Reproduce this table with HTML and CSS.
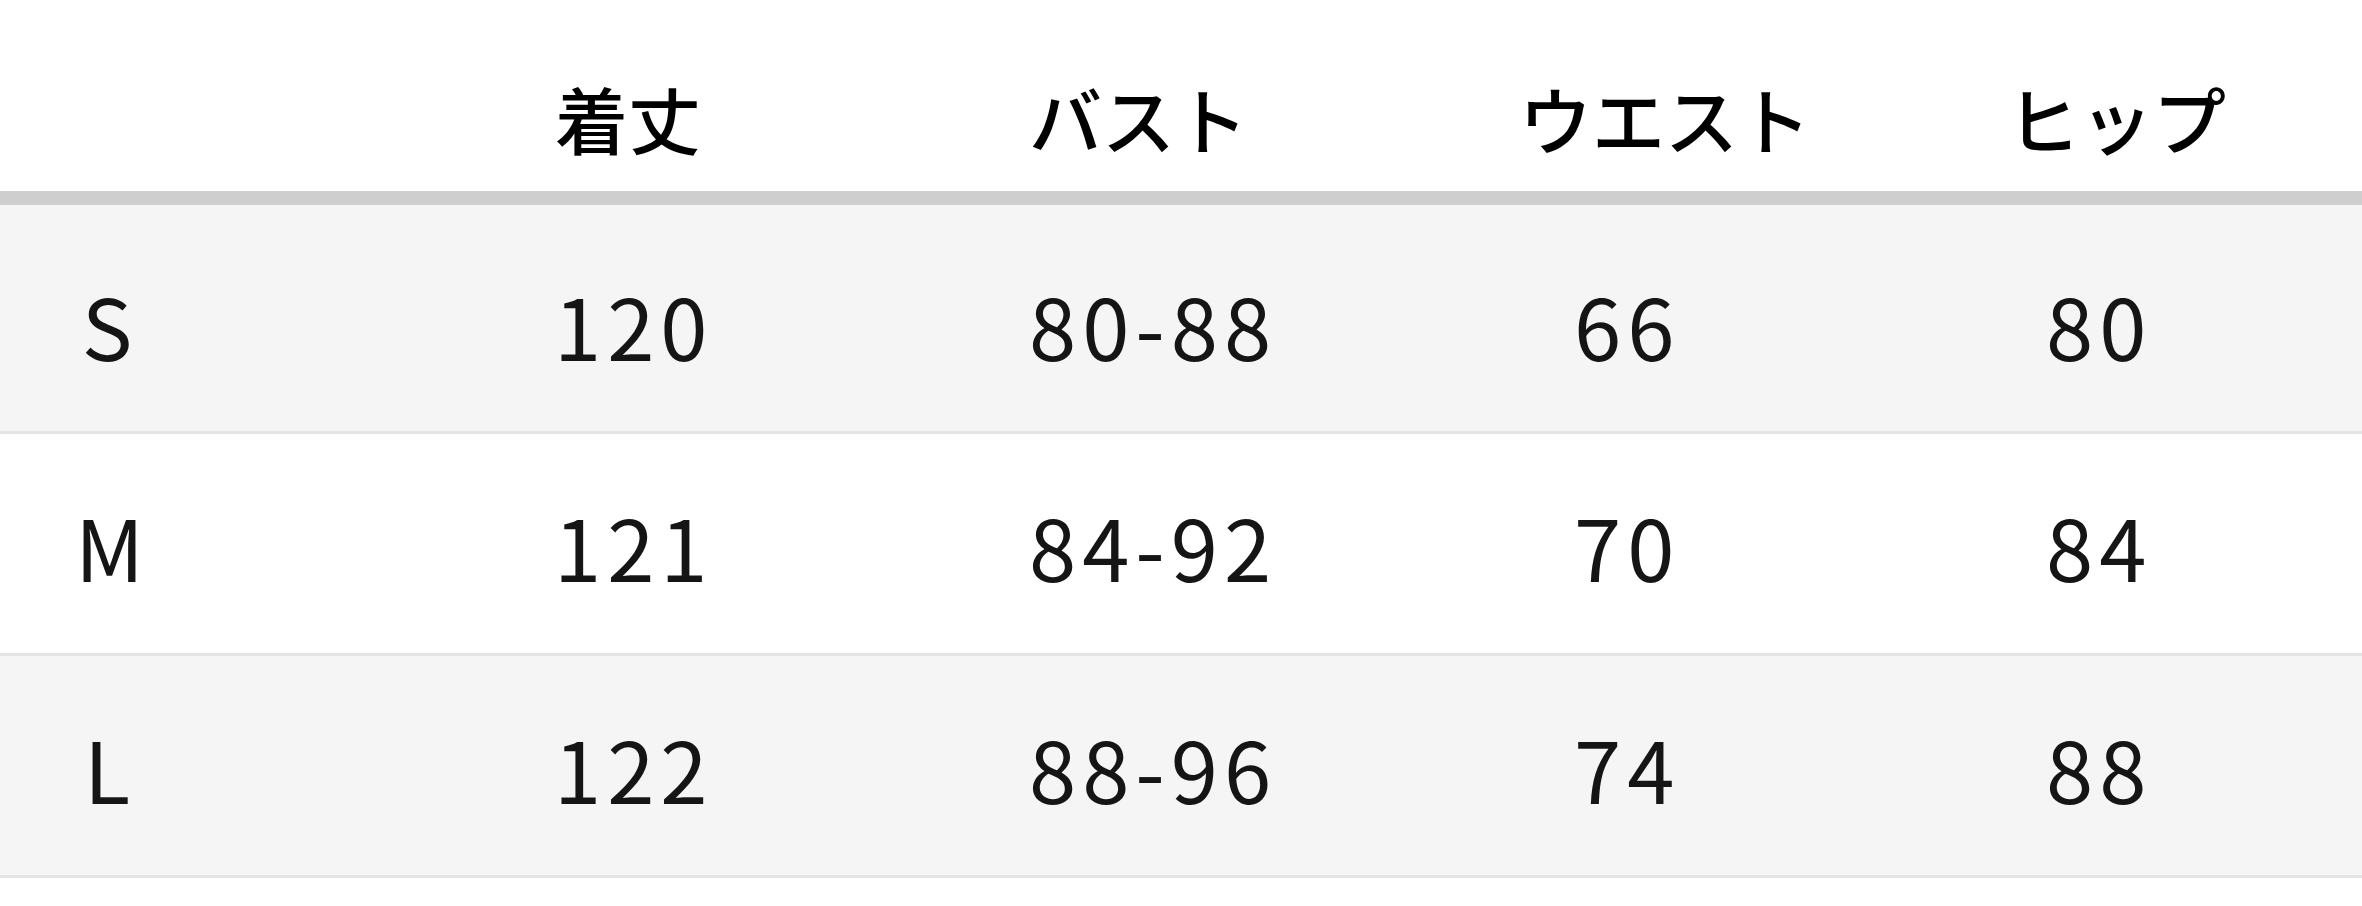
FILE: index.html
```html
<!DOCTYPE html>
<html lang="ja">
<head>
<meta charset="utf-8">
<title>サイズ表</title>
<link rel="stylesheet" href="styles.css">
</head>
<body>
<div class="table">
  <div class="head">
    <div class="hcell"></div>
    <div class="hcell">着丈</div>
    <div class="hcell">バスト</div>
    <div class="hcell">ウエスト</div>
    <div class="hcell">ヒップ</div>
  </div>
  <div class="row shade first">
    <div class="cell"><span class="size">S</span></div>
    <div class="cell">120</div>
    <div class="cell">80-88</div>
    <div class="cell">66</div>
    <div class="cell">80</div>
  </div>
  <div class="row">
    <div class="cell"><span class="size">M</span></div>
    <div class="cell">121</div>
    <div class="cell">84-92</div>
    <div class="cell">70</div>
    <div class="cell">84</div>
  </div>
  <div class="row shade">
    <div class="cell"><span class="size">L</span></div>
    <div class="cell">122</div>
    <div class="cell">88-96</div>
    <div class="cell">74</div>
    <div class="cell">88</div>
  </div>
</div>
</body>
</html>
```

FILE: styles.css
```css
html, body {
  margin: 0;
  padding: 0;
  background: #ffffff;
}

body {
  font-family: "Noto Sans CJK JP", "Noto Sans", sans-serif;
  color: #111111;
}

.table {
  width: 2362px;
  display: flex;
  flex-direction: column;
}

.head {
  height: 191px;
  display: grid;
  grid-template-columns: 555px 474px 490px 488px 1fr;
  align-items: center;
  border-bottom: 14px solid #cecece;
}

.hcell {
  font-size: 73px;
  font-weight: 500;
  line-height: 1;
  color: #000000;
  padding-top: 44px;
  white-space: nowrap;
}

.row {
  display: grid;
  grid-template-columns: 554px 475px 545px 472px 1fr;
  align-items: center;
  border-bottom: 3px solid #e4e4e4;
  box-sizing: border-box;
  height: 222px;
}

.row.first {
  height: 229px;
  padding-top: 8px;
}

.row.shade {
  background: #f5f5f5;
}

.cell {
  font-size: 85px;
  line-height: 1;
  letter-spacing: 6px;
  color: #151515;
  white-space: nowrap;
  padding-top: 2px;
}

.size {
  display: inline-block;
  width: 64px;
  margin-left: 75px;
  text-align: center;
  letter-spacing: 0;
}
```
